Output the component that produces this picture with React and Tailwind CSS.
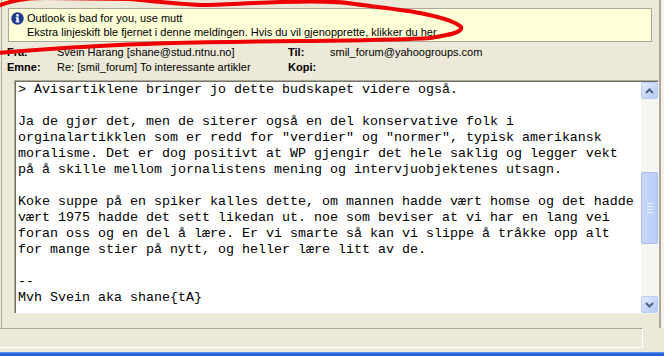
import React from 'react'

const BODY = [
  '> Avisartiklene bringer jo dette budskapet videre også.',
  '',
  'Ja de gjør det, men de siterer også en del konservative folk i',
  'orginalartikklen som er redd for "verdier" og "normer", typisk amerikansk',
  'moralisme. Det er dog positivt at WP gjengir det hele saklig og legger vekt',
  'på å skille mellom jornalistens mening og intervjuobjektenes utsagn.',
  '',
  'Koke suppe på en spiker kalles dette, om mannen hadde vært homse og det hadde',
  'vært 1975 hadde det sett likedan ut. noe som beviser at vi har en lang vei',
  'foran oss og en del å lære. Er vi smarte så kan vi slippe å tråkke opp alt',
  'for mange stier på nytt, og heller lære litt av de.',
  '',
  '--',
  'Mvh Svein aka shane{tA}',
]

function InfoIcon() {
  return (
    <svg width="13" height="13" viewBox="0 0 13 13" className="shrink-0">
      <circle cx="6.5" cy="6.5" r="6.2" fill="#1d3a8f" />
      <circle cx="6.5" cy="3.4" r="1.3" fill="#fff" />
      <rect x="5.4" y="5.3" width="2.3" height="4.4" fill="#fff" />
      <rect x="4.6" y="9.2" width="3.9" height="1.2" fill="#fff" />
      <rect x="4.6" y="5.3" width="1.4" height="1" fill="#fff" />
    </svg>
  )
}

function ScrollButton({ up }) {
  return (
    <div className="flex h-[17px] w-[17px] items-center justify-center rounded-[2px] border border-[#b7cbf6] bg-gradient-to-br from-[#e1eafe] to-[#b4c8f6]">
      <svg width="9" height="6" viewBox="0 0 9 6">
        <path
          d={up ? 'M1 5 L4.5 1.5 L8 5' : 'M1 1 L4.5 4.5 L8 1'}
          fill="none"
          stroke="#4d6185"
          strokeWidth="2"
        />
      </svg>
    </div>
  )
}

function Scrollbar() {
  return (
    <div className="flex w-[17px] shrink-0 flex-col bg-[#f6f5ef]">
      <ScrollButton up />
      <div className="flex-1 pt-[73px] pb-[52px]">
        <div className="flex h-full flex-col items-center justify-center gap-[2px] rounded-[2px] border border-[#a9bdf0] bg-gradient-to-r from-[#c9d8fc] to-[#b9ccf8]">
          <div className="h-px w-[6px] bg-[#eef3ff]" />
          <div className="h-px w-[6px] bg-[#eef3ff]" />
          <div className="h-px w-[6px] bg-[#eef3ff]" />
          <div className="h-px w-[6px] bg-[#eef3ff]" />
        </div>
      </div>
      <ScrollButton />
    </div>
  )
}

export default function App() {
  return (
    <div className="relative flex h-[356px] w-[664px] flex-col overflow-hidden bg-[#ece9d8] font-['Liberation_Sans',Arial,sans-serif] text-[11px] text-black">
      <div className="flex h-[328px]">
        <div className="ml-px flex flex-1 flex-col border-l border-r-2 border-[#aca899]">
          <div className="ml-[6px] mr-[7px] mt-[8px] flex h-[34px] flex-col justify-center border border-[#aca899] bg-[#ffffd8] pl-[2px]">
            <div className="flex items-center gap-[3px] leading-[14px]">
              <InfoIcon />
              <span>Outlook is bad for you, use mutt</span>
            </div>
            <div className="pl-[16px] leading-[14px]">
              Ekstra linjeskift ble fjernet i denne meldingen. Hvis du vil gjenopprette, klikker du her.
            </div>
          </div>

          <div className="mt-[3px] grid grid-cols-[50px_231px_42px_1fr] pl-[5px] leading-[15px]">
            <span className="font-bold">Fra:</span>
            <span>Svein Harang [shane@stud.ntnu.no]</span>
            <span className="font-bold">Til:</span>
            <span>smil_forum@yahoogroups.com</span>
            <span className="font-bold">Emne:</span>
            <span>Re: [smil_forum] To interessante artikler</span>
            <span className="font-bold">Kopi:</span>
            <span></span>
          </div>

          <div className="ml-[12px] mt-[5px] flex h-[234px] border-l border-t border-[#aca899] border-b border-r border-b-[#f4f3ee] border-r-[#f4f3ee]">
            <div className="flex flex-1 overflow-hidden border-l border-t border-[#716f64] bg-white">
              <div className="flex-1 whitespace-pre pl-[2px] font-['Liberation_Mono','Courier_New',monospace] text-[13.33px] leading-[16px]">
                {BODY.map((line, i) => (
                  <div key={i} className="h-[16px]">{line}</div>
                ))}
              </div>
              <Scrollbar />
            </div>
          </div>
        </div>
        <div className="w-[3px] bg-[#f3f2ec]" />
      </div>

      <div className="flex">
        <div className="h-[20px] w-[643px] border-t border-r border-b border-[#aca899] border-r-white border-b-white" />
      </div>
      <div className="mt-auto h-[4px] border-t border-[#5b93f0] bg-[#2a62dc]" />

      <svg
        className="pointer-events-none absolute left-0 top-0"
        width="664"
        height="60"
        viewBox="0 0 664 60"
      >
        <path
          d="M-2 6 C8 2 20 -2 45 -2 L130 -1 C150 1 178 4 200 5 C222 5 245 3 280 2 C310 1 338 1 355 4 C375 7 400 9 420 13 C440 17 455 21 461 27 C463 32 450 35 430 38 C400 40 380 40 300 41 C200 42 150 43 100 46 C60 48 30 50 -2 53"
          fill="none"
          stroke="#ee0000"
          strokeWidth="4"
          strokeLinecap="round"
          strokeLinejoin="round"
        />
      </svg>
    </div>
  )
}
